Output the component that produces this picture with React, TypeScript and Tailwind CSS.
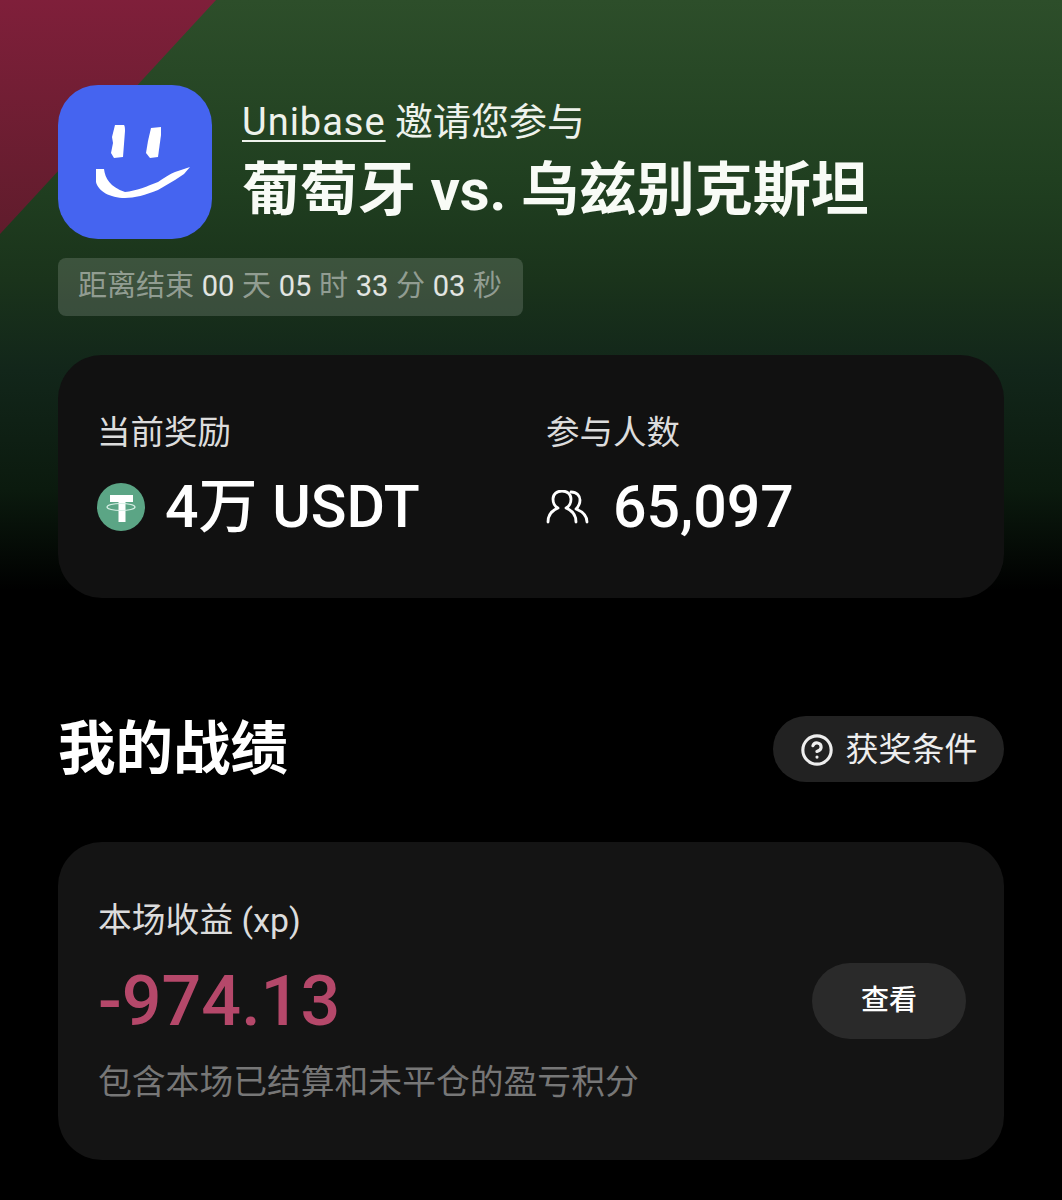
import { CircleHelp } from "lucide-react";

const fontStack = "font-['Roboto','Noto_Sans_CJK_SC',sans-serif]";

function SmileLogo() {
  return (
    <svg viewBox="0 0 154 154" className="w-full h-full">
      <path d="M57 40 L66 40 Q67 41 67 46 L65 72 L56 73 L53 68 L55 58 L54 52 Z" fill="#fff" />
      <path d="M93 43 L103 42 L103 50 L100 72 L92 73 L88 68 L90 56 Z" fill="#fff" />
      <path
        d="M38 84 L46 84 C47 93 52 102 67 107 C78 106 90 101 100 97 C106 93 112 89 117 87 L132 82 L126 89 L117 95 L100 105 C88 110 76 113 67 113 C52 113 40 106 38 97 Z"
        fill="#fff"
      />
    </svg>
  );
}

function TetherIcon() {
  return (
    <svg viewBox="0 0 48 48" className="w-12 h-12 shrink-0">
      <circle cx="24" cy="24" r="24" fill="#5ba585" />
      <path d="M13 12h23v7h-7.500v20h-7V19H13z" fill="#fff" />
      <ellipse cx="24" cy="24" rx="14" ry="3.500" fill="none" stroke="#d8f0e6" strokeWidth="1.200" />
    </svg>
  );
}

function PeopleIcon() {
  return (
    <svg viewBox="9 9 43 34" className="w-[43px] h-[34px] shrink-0" fill="none" stroke="#fff" strokeWidth="2.800" strokeLinecap="round" strokeLinejoin="round">
      <path d="M11 41c0-8 5-12 10-14-4-2-5-5-5-9 0-5 4-8 9-8s9 3 9 8c0 4-1 7-5 9 5 2 10 6 10 14" />
      <path d="M34 11c6 0 9 4 9 8 0 4-2 7-4 9 5 2 11 6 11 13" />
    </svg>
  );
}

export default function App() {
  return (
    <div className={`relative min-h-[1200px] w-full overflow-hidden bg-black text-white ${fontStack}`}>
      <div className="absolute inset-x-0 top-0 h-[600px] bg-[linear-gradient(to_bottom,#2d4e2a_0px,#203f20_180px,#1a331b_280px,#12261a_370px,#0b1a0e_490px,#000_590px)]" />
      <div className="absolute left-0 top-0 w-[216px] h-[234px] bg-gradient-to-b from-[#7f1f3a] to-[#601c2c] [clip-path:polygon(0_0,100%_0,0_100%)]" />

      <div className="relative px-[58px] pt-[85px]">
        <div className="flex items-center gap-[30px]">
          <div className="w-[154px] h-[154px] rounded-[40px] bg-[#4564f0] shrink-0">
            <SmileLogo />
          </div>
          <div className="mt-2">
            <div className="text-[38px] leading-[48px] text-[#eef2ec]">
              <span className="underline underline-offset-[5px] decoration-2 tracking-[1px]">Unibase</span> 邀请您参与
            </div>
            <div className="text-[58px] leading-[88px] font-bold text-[#f8fbf6]">葡萄牙 vs. 乌兹别克斯坦</div>
          </div>
        </div>

        <div className="mt-[19px] flex w-[465px] h-[58px] items-center gap-[7.7px] rounded-lg bg-white/15 px-5 text-[29px] text-white/45">
          <span>距离结束</span>
          <span className="text-white/85">00</span>
          <span>天</span>
          <span className="text-white/85">05</span>
          <span>时</span>
          <span className="text-white/85">33</span>
          <span>分</span>
          <span className="text-white/85">03</span>
          <span>秒</span>
        </div>

        <div className="mt-[39px] h-[243px] rounded-[44px] bg-[#111111] pl-10 pt-[54px] flex">
          <div className="w-[448px]">
            <div className="text-[33.500px] leading-[48px] text-[#dcdcdc] -ml-[1px]">当前奖励</div>
            <div className="mt-[14px] flex items-center gap-5 -ml-[1px]">
              <TetherIcon />
              <span className="text-[59px] leading-[72px] font-medium">4万 USDT</span>
            </div>
          </div>
          <div>
            <div className="text-[33.500px] leading-[48px] text-[#dcdcdc]">参与人数</div>
            <div className="mt-[14px] flex items-center gap-6">
              <PeopleIcon />
              <span className="text-[59px] leading-[72px] font-medium">65,097</span>
            </div>
          </div>
        </div>

        <div className="mt-[118px] flex h-[66px] items-center justify-between">
          <div className="pt-[2px] text-[57.500px] leading-[64px] font-bold">我的战绩</div>
          <div className="flex h-[66px] w-[231px] items-center justify-center gap-3 rounded-full bg-[#222222] pt-[2px] text-[33px] text-[#eeeeee]">
            <CircleHelp size={34} strokeWidth={2.2} />
            <span>获奖条件</span>
          </div>
        </div>

        <div className="mt-[60px] h-[318px] rounded-[44px] bg-[#141414] pl-10 pr-[38px] flex items-center justify-between">
          <div className="pt-[2px]">
            <div className="text-[33.800px] leading-[48px] text-[#dcdcdc]">本场收益 (xp)</div>
            <div className="mt-[12px] text-[70px] leading-[88px] font-medium text-[#b5486a]">-974.13</div>
            <div className="mt-[14px] text-[33.800px] leading-[48px] text-[#777777]">包含本场已结算和未平仓的盈亏积分</div>
          </div>
          <div className="flex h-[76px] w-[154px] items-center justify-center rounded-full bg-[#2a2a2a] text-[28px] font-medium">
            查看
          </div>
        </div>
      </div>
    </div>
  );
}
